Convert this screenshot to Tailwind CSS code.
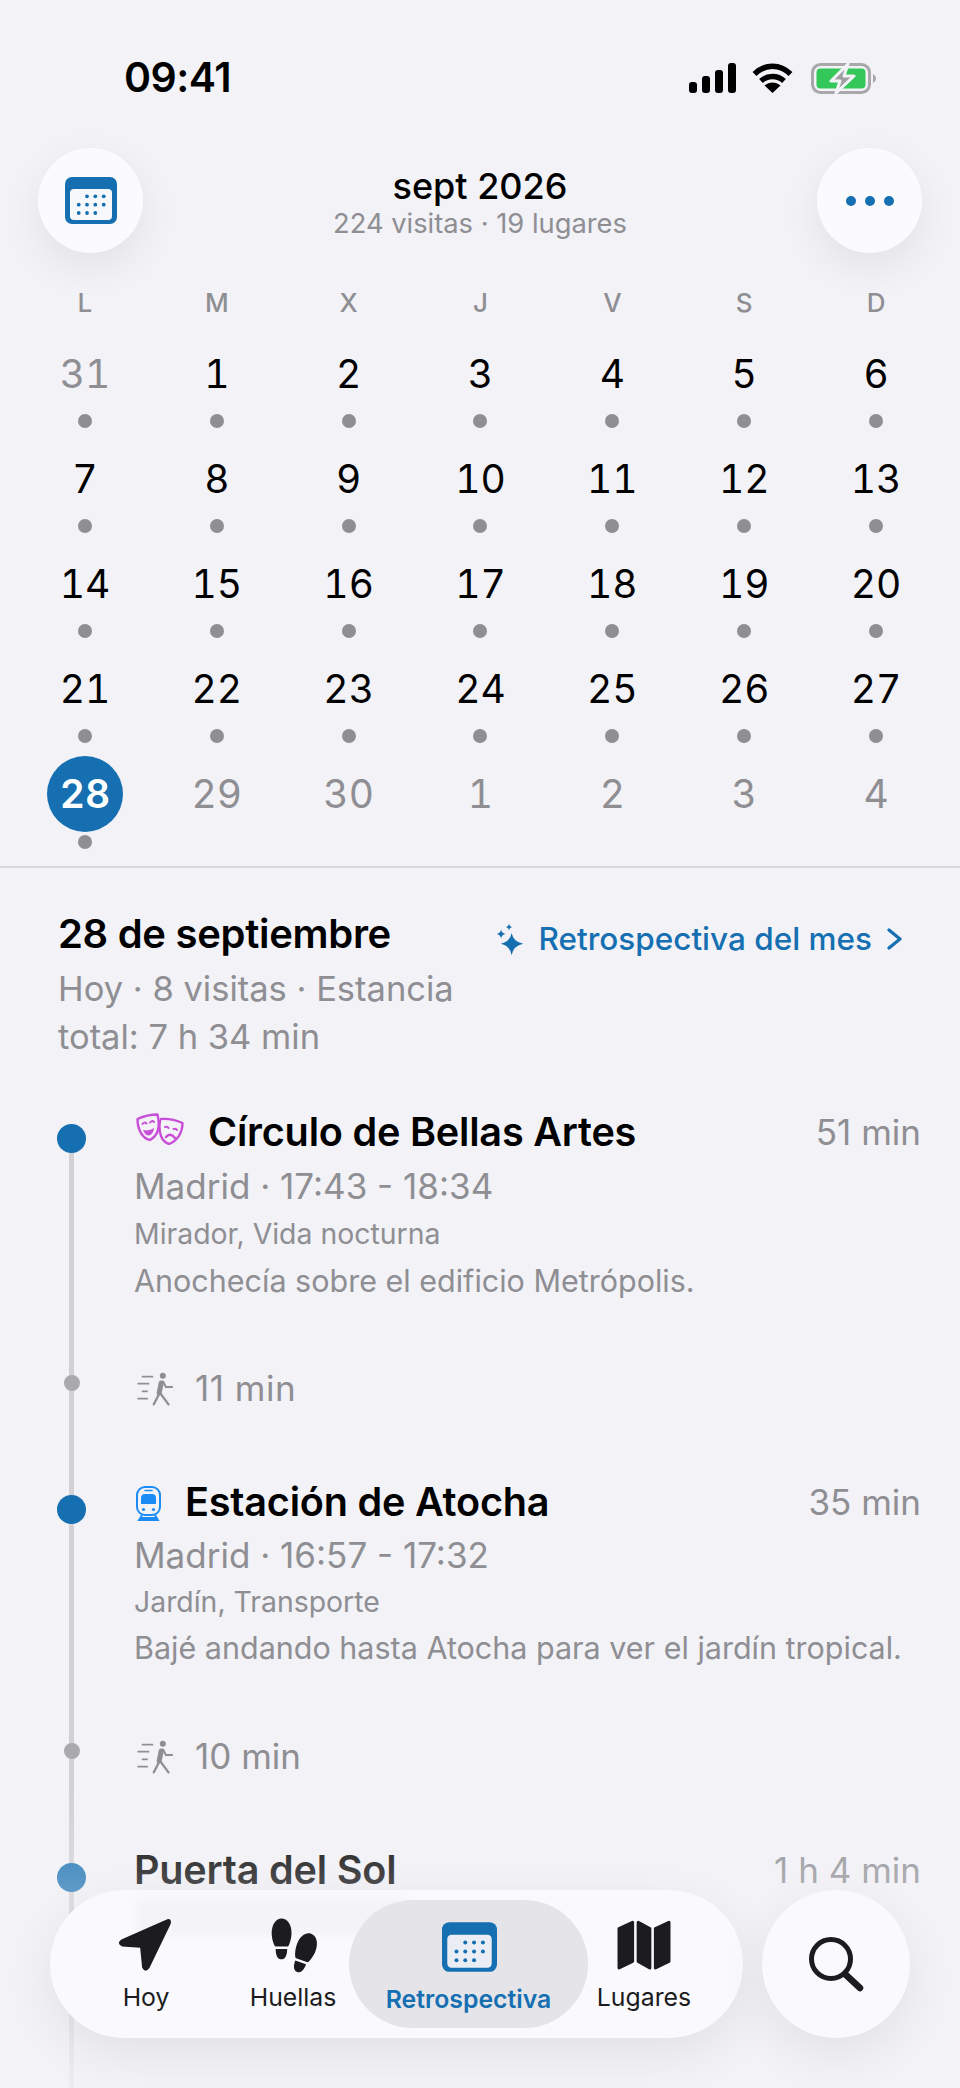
<!DOCTYPE html>
<html lang="es">
<head>
<meta charset="utf-8">
<script src="https://cdn.jsdelivr.net/npm/@tailwindcss/browser@4"></script>
</head>
<body class="m-0">
<div class="relative w-[960px] h-[2088px] overflow-hidden bg-[#f2f2f7] font-['Inter',sans-serif] text-black flex flex-col">

  <!-- status bar -->
  <div class="mt-[47px] h-[60px] flex items-center justify-between pl-[124px] pr-[84px]">
    <span class="text-[41px] leading-none font-semibold tracking-[-0.5px]">09:41</span>
    <div class="flex items-center gap-[16px] mt-[2px]">
      <svg width="47" height="30" viewBox="0 0 47 30"><rect x="0" y="19" width="8" height="11" rx="3"/><rect x="13" y="13" width="8" height="17" rx="3"/><rect x="26" y="7" width="8" height="23" rx="3"/><rect x="39" y="0" width="8" height="30" rx="3"/></svg>
      <svg width="41" height="30" viewBox="0 0 41 30" fill="none" stroke="#000" stroke-width="5.5"><path d="M2.5 11 C13 0.5 28 0.5 38.5 11"/><path d="M9 18 C15.5 12 25.5 12 32 18"/><path d="M20.5 30 L12.5 22.5 C17.5 18.5 23.5 18.5 28.5 22.5 Z" fill="#000" stroke="none"/></svg>
      <svg class="ml-[2px]" width="65" height="31" viewBox="0 0 65 31" fill="none"><rect x="1.5" y="1.5" width="57" height="28" rx="8" stroke="#a8a8ab" stroke-width="3"/><rect x="5.5" y="5.5" width="49" height="20" rx="4" fill="#34c759"/><path d="M62 11 v9 c2 -1 3 -3 3 -4.5 s-1 -3.5 -3 -4.5z" fill="#a8a8ab"/><path d="M37 1 L20 18 H29 L25 30 L43 13 H33 Z" fill="#a0a0a4" stroke="#f2f2f7" stroke-width="3" stroke-linejoin="round"/></svg>
    </div>
  </div>

  <!-- header -->
  <div class="mt-[41px] h-[105px] px-[38px] flex items-center justify-between">
    <div class="w-[105px] h-[105px] rounded-full bg-[#fbfbfd] shadow-[0_14px_40px_rgba(0,0,0,0.07)] flex items-center justify-center">
      <svg width="52" height="47" viewBox="0 0 52 47"><rect width="52" height="47" rx="7" fill="#156fb1"/><rect x="5" y="12" width="42" height="31" rx="4" fill="#f6f8fb"/><g fill="#156fb1"><circle cx="22" cy="19.3" r="1.9"/><circle cx="30.3" cy="19.3" r="1.9"/><circle cx="38.7" cy="19.3" r="1.9"/><circle cx="13.7" cy="27.7" r="1.9"/><circle cx="22" cy="27.7" r="1.9"/><circle cx="30.3" cy="27.7" r="1.9"/><circle cx="38.7" cy="27.7" r="1.9"/><circle cx="13.7" cy="36" r="1.9"/><circle cx="22" cy="36" r="1.9"/><circle cx="30.3" cy="36" r="1.9"/></g></svg>
    </div>
    <div class="flex flex-col items-center mt-[2px]">
      <span class="text-[36px] leading-[44px] font-medium">sept 2026</span>
      <span class="text-[27.3px] leading-[32px] text-[#8e8e93]">224 visitas · 19 lugares</span>
    </div>
    <div class="w-[105px] h-[105px] rounded-full bg-[#fbfbfd] shadow-[0_14px_40px_rgba(0,0,0,0.07)] flex items-center justify-center gap-[9px]">
      <span class="w-[10px] h-[10px] rounded-full bg-[#156fb1]"></span>
      <span class="w-[10px] h-[10px] rounded-full bg-[#156fb1]"></span>
      <span class="w-[10px] h-[10px] rounded-full bg-[#156fb1]"></span>
    </div>
  </div>

  <!-- weekdays -->
  <div class="mt-[33px] h-[34px] pl-[19px] pr-[18px] grid grid-cols-7 text-center text-[26px] leading-[34px] font-medium text-[#8e8e93]">
    <span>L</span><span>M</span><span>X</span><span>J</span><span>V</span><span>S</span><span>D</span>
  </div>

  <!-- month grid -->
  <div class="mt-[26px] pl-[19px] pr-[18px] grid grid-cols-7 gap-y-[23px] text-center text-[39px] leading-[56px] tabular-nums">
    <div class="flex flex-col items-center text-[#8e8e93]">31<span class="mt-[12px] w-[14px] h-[14px] rounded-full bg-[#8e8e93]"></span></div>
    <div class="flex flex-col items-center">1<span class="mt-[12px] w-[14px] h-[14px] rounded-full bg-[#8e8e93]"></span></div>
    <div class="flex flex-col items-center">2<span class="mt-[12px] w-[14px] h-[14px] rounded-full bg-[#8e8e93]"></span></div>
    <div class="flex flex-col items-center">3<span class="mt-[12px] w-[14px] h-[14px] rounded-full bg-[#8e8e93]"></span></div>
    <div class="flex flex-col items-center">4<span class="mt-[12px] w-[14px] h-[14px] rounded-full bg-[#8e8e93]"></span></div>
    <div class="flex flex-col items-center">5<span class="mt-[12px] w-[14px] h-[14px] rounded-full bg-[#8e8e93]"></span></div>
    <div class="flex flex-col items-center">6<span class="mt-[12px] w-[14px] h-[14px] rounded-full bg-[#8e8e93]"></span></div>

    <div class="flex flex-col items-center">7<span class="mt-[12px] w-[14px] h-[14px] rounded-full bg-[#8e8e93]"></span></div>
    <div class="flex flex-col items-center">8<span class="mt-[12px] w-[14px] h-[14px] rounded-full bg-[#8e8e93]"></span></div>
    <div class="flex flex-col items-center">9<span class="mt-[12px] w-[14px] h-[14px] rounded-full bg-[#8e8e93]"></span></div>
    <div class="flex flex-col items-center">10<span class="mt-[12px] w-[14px] h-[14px] rounded-full bg-[#8e8e93]"></span></div>
    <div class="flex flex-col items-center">11<span class="mt-[12px] w-[14px] h-[14px] rounded-full bg-[#8e8e93]"></span></div>
    <div class="flex flex-col items-center">12<span class="mt-[12px] w-[14px] h-[14px] rounded-full bg-[#8e8e93]"></span></div>
    <div class="flex flex-col items-center">13<span class="mt-[12px] w-[14px] h-[14px] rounded-full bg-[#8e8e93]"></span></div>

    <div class="flex flex-col items-center">14<span class="mt-[12px] w-[14px] h-[14px] rounded-full bg-[#8e8e93]"></span></div>
    <div class="flex flex-col items-center">15<span class="mt-[12px] w-[14px] h-[14px] rounded-full bg-[#8e8e93]"></span></div>
    <div class="flex flex-col items-center">16<span class="mt-[12px] w-[14px] h-[14px] rounded-full bg-[#8e8e93]"></span></div>
    <div class="flex flex-col items-center">17<span class="mt-[12px] w-[14px] h-[14px] rounded-full bg-[#8e8e93]"></span></div>
    <div class="flex flex-col items-center">18<span class="mt-[12px] w-[14px] h-[14px] rounded-full bg-[#8e8e93]"></span></div>
    <div class="flex flex-col items-center">19<span class="mt-[12px] w-[14px] h-[14px] rounded-full bg-[#8e8e93]"></span></div>
    <div class="flex flex-col items-center">20<span class="mt-[12px] w-[14px] h-[14px] rounded-full bg-[#8e8e93]"></span></div>

    <div class="flex flex-col items-center">21<span class="mt-[12px] w-[14px] h-[14px] rounded-full bg-[#8e8e93]"></span></div>
    <div class="flex flex-col items-center">22<span class="mt-[12px] w-[14px] h-[14px] rounded-full bg-[#8e8e93]"></span></div>
    <div class="flex flex-col items-center">23<span class="mt-[12px] w-[14px] h-[14px] rounded-full bg-[#8e8e93]"></span></div>
    <div class="flex flex-col items-center">24<span class="mt-[12px] w-[14px] h-[14px] rounded-full bg-[#8e8e93]"></span></div>
    <div class="flex flex-col items-center">25<span class="mt-[12px] w-[14px] h-[14px] rounded-full bg-[#8e8e93]"></span></div>
    <div class="flex flex-col items-center">26<span class="mt-[12px] w-[14px] h-[14px] rounded-full bg-[#8e8e93]"></span></div>
    <div class="flex flex-col items-center">27<span class="mt-[12px] w-[14px] h-[14px] rounded-full bg-[#8e8e93]"></span></div>

    <div class="flex flex-col items-center"><span class="-mt-[10px] w-[76px] h-[76px] rounded-full bg-[#156fb1] text-white font-semibold flex items-center justify-center">28</span><span class="mt-[3px] w-[14px] h-[14px] rounded-full bg-[#8e8e93]"></span></div>
    <div class="text-[#8e8e93]">29</div>
    <div class="text-[#8e8e93]">30</div>
    <div class="text-[#8e8e93]">1</div>
    <div class="text-[#8e8e93]">2</div>
    <div class="text-[#8e8e93]">3</div>
    <div class="text-[#8e8e93]">4</div>
  </div>

  <div class="mt-[17px] h-[2px] bg-[#d8d8dc]"></div>

  <!-- day heading -->
  <div class="pt-[42px] pl-[58px] pr-[58px] flex justify-between items-start">
    <div>
      <div class="text-[40px] leading-[48px] font-semibold tracking-[-0.3px]">28 de septiembre</div>
      <div class="mt-[7px] text-[34.5px] leading-[48px] text-[#8e8e93]">Hoy · 8 visitas · Estancia<br>total: 7 h 34 min</div>
    </div>
    <div class="mt-[7px] flex items-center text-[#156fb1]">
      <svg class="mr-[13px]" width="30" height="33" viewBox="50 65 90 100" fill="#156fb1"><path d="M100 95 Q105 122 135 128 Q105 134 100 163 Q95 134 67 128 Q95 122 100 95Z"/><path d="M68 85 Q70 96 81 98 Q70 100 68 112 Q66 100 55 98 Q66 96 68 85Z"/><path d="M92 67 Q93 75 101 77 Q93 79 92 87 Q91 79 83 77 Q91 75 92 67Z"/></svg>
      <span class="text-[31.5px] leading-[44px] font-medium">Retrospectiva del mes</span>
      <svg class="ml-[15px]" width="15" height="22" viewBox="0 0 15 22" fill="none" stroke="#156fb1" stroke-width="3.2" stroke-linecap="round" stroke-linejoin="round"><path d="M2 2 L13 11 L2 20"/></svg>
    </div>
  </div>

  <!-- timeline -->
  <div class="relative mt-[47px] pr-[39px]">
    <div class="absolute left-[69px] top-[31px] bottom-[-400px] w-[5px] bg-[#d1d1d6]"></div>

    <!-- item 1 -->
    <div class="flex">
      <div class="w-[134px] shrink-0 pl-[57px] pt-[16px]"><div class="relative w-[29px] h-[29px] rounded-full bg-[#156fb1]"></div></div>
      <div class="flex-1">
        <div class="flex items-center justify-between h-[48px]">
          <div class="flex items-center">
            <svg class="mt-[-6px] ml-[2px] mr-[24px]" width="48" height="32" viewBox="0 0 48 32" fill="none" stroke="#c94fd8" stroke-width="2.4" stroke-linecap="round" stroke-linejoin="round">
              <path d="M1.5 6 C8 3 16 1.5 21.5 1.5 C24 12 23 22 14 27 C6 25.5 1.5 16 1.5 6Z"/>
              <path d="M6.5 11 q2 -2.5 4 -.5 M14 9.5 q2 -2.5 4 -.5" stroke-width="2"/>
              <path d="M7 17 Q13 18.5 18 15 Q17 22 13 22.5 Q9 22.5 7 17Z" fill="#c94fd8" stroke="none"/>
              <path d="M25 6 C32 5.5 40 7 46.5 10 C46.5 20 41 28 33 31 C26 29 22 20 24 8"/>
              <path d="M29 14 q2.5 -1 3.5 1 M37.5 16 q2.5 -1 3.5 1" stroke-width="2"/>
              <path d="M30 24 Q34 19 39 25" stroke-width="2.4"/>
            </svg>
            <span class="text-[39.6px] leading-[48px] font-semibold tracking-[-0.2px]">Círculo de Bellas Artes</span>
          </div>
          <span class="text-[35px] leading-[48px] text-[#8e8e93]">51 min</span>
        </div>
        <div class="mt-[8px] text-[35px] leading-[44px] text-[#8e8e93]">Madrid · 17:43 - 18:34</div>
        <div class="mt-[7px] text-[28.4px] leading-[38px] text-[#8e8e93]">Mirador, Vida nocturna</div>
        <div class="mt-[7px] text-[30.5px] leading-[42px] text-[#8e8e93]">Anochecía sobre el edificio Metrópolis.</div>
      </div>
    </div>

    <!-- walk 1 -->
    <div class="flex mt-[64px] h-[44px]">
      <div class="w-[134px] shrink-0 pl-[64px] pt-[9px]"><div class="relative w-[16px] h-[16px] rounded-full bg-[#a9a9ae]"></div></div>
      <div class="flex items-center">
        <svg class="ml-[3px] mr-[22px]" width="37" height="35" viewBox="50 30 110 105" fill="none" stroke="#8e8e93" stroke-linecap="round" stroke-linejoin="round">
          <circle cx="127" cy="44" r="9" fill="#8e8e93" stroke="none"/>
          <path d="M122 66 L116 96" stroke-width="15"/>
          <path d="M116 98 L100 130" stroke-width="7"/>
          <path d="M120 98 L144 130" stroke-width="7"/>
          <path d="M128 62 L136 78 L155 78" stroke-width="6"/>
          <path d="M66 47 H96 M53 68 H84 M66 91 H80 M53 113 H80" stroke-width="5"/>
        </svg>
        <span class="-ml-[1px] text-[35px] leading-[44px] text-[#8e8e93] tracking-[0.5px]">11 min</span>
      </div>
    </div>

    <!-- item 2 -->
    <div class="flex mt-[68px]">
      <div class="w-[134px] shrink-0 pl-[57px] pt-[17px]"><div class="relative w-[29px] h-[29px] rounded-full bg-[#156fb1]"></div></div>
      <div class="flex-1">
        <div class="flex items-center justify-between h-[48px]">
          <div class="flex items-center">
            <svg class="mt-[2px] ml-[2px] mr-[24px]" width="25" height="35" viewBox="0 0 25 35" fill="none" stroke="#1c8cf5" stroke-width="2" stroke-linecap="round">
              <rect x="1" y="1" width="23" height="28" rx="8"/>
              <path d="M9 4.5 H16" stroke-width="1.6"/>
              <path d="M5 18 V12 Q5 8 9 8 H16 Q20 8 20 12 V18 Z" fill="#1c8cf5" stroke="none"/>
              <circle cx="7.5" cy="23.5" r="1.6" fill="#1c8cf5" stroke="none"/>
              <circle cx="17.5" cy="23.5" r="1.6" fill="#1c8cf5" stroke="none"/>
              <path d="M6 29 L3 34 H22 L19 29 M4.5 32 H20.5" stroke-width="1.8"/>
            </svg>
            <span class="text-[39.6px] leading-[48px] font-semibold tracking-[-0.2px]">Estación de Atocha</span>
          </div>
          <span class="text-[35px] leading-[48px] text-[#8e8e93]">35 min</span>
        </div>
        <div class="mt-[7px] text-[35px] leading-[44px] text-[#8e8e93]">Madrid · 16:57 - 17:32</div>
        <div class="mt-[6px] text-[28.4px] leading-[38px] text-[#8e8e93]">Jardín, Transporte</div>
        <div class="mt-[6px] text-[30.5px] leading-[42px] text-[#8e8e93]">Bajé andando hasta Atocha para ver el jardín tropical.</div>
      </div>
    </div>

    <!-- walk 2 -->
    <div class="flex mt-[65px] h-[44px]">
      <div class="w-[134px] shrink-0 pl-[64px] pt-[9px]"><div class="relative w-[16px] h-[16px] rounded-full bg-[#a9a9ae]"></div></div>
      <div class="flex items-center">
        <svg class="ml-[3px] mr-[22px]" width="37" height="35" viewBox="50 30 110 105" fill="none" stroke="#8e8e93" stroke-linecap="round" stroke-linejoin="round">
          <circle cx="127" cy="44" r="9" fill="#8e8e93" stroke="none"/>
          <path d="M122 66 L116 96" stroke-width="15"/>
          <path d="M116 98 L100 130" stroke-width="7"/>
          <path d="M120 98 L144 130" stroke-width="7"/>
          <path d="M128 62 L136 78 L155 78" stroke-width="6"/>
          <path d="M66 47 H96 M53 68 H84 M66 91 H80 M53 113 H80" stroke-width="5"/>
        </svg>
        <span class="-ml-[1px] text-[35px] leading-[44px] text-[#8e8e93]">10 min</span>
      </div>
    </div>

    <!-- item 3 -->
    <div class="flex mt-[68px]">
      <div class="w-[134px] shrink-0 pl-[57px] pt-[17px]"><div class="relative w-[29px] h-[29px] rounded-full bg-[#156fb1]"></div></div>
      <div class="flex-1">
        <div class="flex items-center justify-between h-[48px]">
          <span class="text-[39.6px] leading-[48px] font-semibold tracking-[-0.2px]">Puerta del Sol</span>
          <span class="text-[35px] leading-[48px] text-[#8e8e93]">1 h 4 min</span>
        </div>
      </div>
    </div>
  </div>

  <!-- fade over the list -->
  <div class="absolute left-0 right-0 top-[1790px] bottom-0 bg-gradient-to-b from-[#f2f2f7]/0 via-[#f2f2f7]/50 to-[#f2f2f7]/80"></div>

  <!-- tab bar -->
  <div class="absolute left-[50px] top-[1890px] w-[693px] h-[148px] rounded-full bg-[#fafafd] shadow-[0_16px_50px_rgba(0,0,0,0.07)] overflow-hidden flex items-center">
    <div class="absolute left-[86px] top-[10px] w-[270px] h-[36px] bg-[#8e8e93]/5 blur-[5px]"></div>
    <div class="relative ml-[46px] w-[100px] flex flex-col items-center">
      <svg class="-ml-[3px]" width="57" height="56" viewBox="50 60 170 165" fill="#1c1c1e"><path d="M203 66 L66 126 Q50 138 68 147 L122 151 L128 210 Q138 228 150 210 L213 80 Q217 62 203 66Z"/></svg>
      <span class="mt-[9px] text-[24.8px] leading-[30px] text-[#1c1c1e]">Hoy</span>
    </div>
    <div class="relative ml-[42px] w-[110px] flex flex-col items-center">
      <svg width="53" height="56" viewBox="495 40 160 195" fill="#1c1c1e">
        <g><path d="M499 95 C499 65 515 45 533 45 C553 45 568 65 568 95 C568 120 558 143 555 143 L513 143 C508 143 499 120 499 95Z"/><path d="M513 151 H553 C553 175 545 187 533 187 C520 187 513 175 513 151Z"/></g>
        <g transform="translate(79 49) rotate(20 533 116)"><path d="M499 95 C499 65 515 45 533 45 C553 45 568 65 568 95 C568 120 558 143 555 143 L513 143 C508 143 499 120 499 95Z"/><path d="M513 151 H553 C553 175 545 187 533 187 C520 187 513 175 513 151Z"/></g>
      </svg>
      <span class="mt-[9px] text-[24.8px] leading-[30px] text-[#1c1c1e]">Huellas</span>
    </div>
    <div class="relative ml-[1px] w-[239px] h-[128px] rounded-[64px] bg-[#e5e5e9] flex flex-col items-center pt-[19px]">
      <svg class="ml-[2px]" width="55" height="56" viewBox="0 -2 52 51"><rect width="52" height="47" rx="7" fill="#156fb1"/><rect x="5" y="12" width="42" height="31" rx="4" fill="#eaeef4"/><g fill="#156fb1"><circle cx="22" cy="19.3" r="1.9"/><circle cx="30.3" cy="19.3" r="1.9"/><circle cx="38.7" cy="19.3" r="1.9"/><circle cx="13.7" cy="27.7" r="1.9"/><circle cx="22" cy="27.7" r="1.9"/><circle cx="30.3" cy="27.7" r="1.9"/><circle cx="38.7" cy="27.7" r="1.9"/><circle cx="13.7" cy="36" r="1.9"/><circle cx="22" cy="36" r="1.9"/><circle cx="30.3" cy="36" r="1.9"/></g></svg>
      <span class="mt-[9px] text-[24.8px] leading-[30px] font-semibold text-[#156fb1]">Retrospectiva</span>
    </div>
    <div class="relative ml-[2px] w-[108px] flex flex-col items-center">
      <svg width="58" height="56" viewBox="820 55 185 170" fill="#1c1c1e" stroke="#1c1c1e" stroke-width="10" stroke-linejoin="round"><path d="M833 88 L876 68 V192 L833 213Z"/><path d="M894 68 L931 88 V213 L894 192Z"/><path d="M949 88 L992 68 V192 L949 213Z"/></svg>
      <span class="mt-[9px] text-[24.8px] leading-[30px] text-[#1c1c1e]">Lugares</span>
    </div>
  </div>

  <!-- search button -->
  <div class="absolute left-[762px] top-[1890px] w-[148px] h-[148px] rounded-full bg-[#fafafd] shadow-[0_16px_50px_rgba(0,0,0,0.07)] flex items-center justify-center">
    <svg width="56" height="56" viewBox="0 0 56 56" fill="none" stroke="#1c1c1e" stroke-linecap="round"><circle cx="23" cy="23" r="19.5" stroke-width="5"/><path d="M37 38 L52 52" stroke-width="6.5"/></svg>
  </div>
</div>
</body>
</html>
